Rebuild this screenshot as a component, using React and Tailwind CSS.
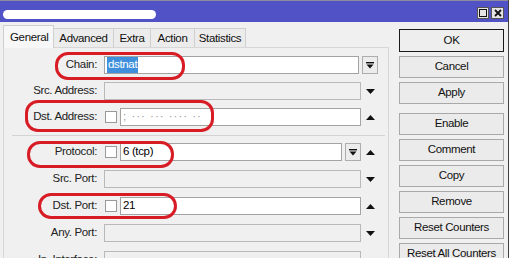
import React from 'react';

const ArrowDown = () => (
  <svg width="9" height="5" viewBox="0 0 9 5"><path d="M0 0H9L4.5 5Z" fill="#111" /></svg>
);

const ArrowUp = () => (
  <svg width="9" height="5" viewBox="0 0 9 5"><path d="M0 5H9L4.5 0Z" fill="#111" /></svg>
);

// little drop-down button: bar above a down triangle
const DropButton = ({ className = '' }) => (
  <div className={`w-[16px] h-[18px] shrink-0 border border-[#adadad] bg-[#ececec] flex items-center justify-center ${className}`}>
    <svg width="8" height="7" viewBox="0 0 8 7">
      <rect x="0" y="0" width="8" height="1.4" fill="#111" />
      <path d="M0.5 2.6H7.5L4 6.6Z" fill="#111" />
    </svg>
  </div>
);

const Checkbox = () => (
  <div className="w-[12px] h-[12px] ml-[1px] border border-[#9a9a9a] bg-white shrink-0" />
);

const Row = ({ label, children, arrow }) => (
  <div className="flex items-center h-[18px] shrink-0">
    <div className="w-[94px] text-right text-[#222] pr-[1px]">{label}</div>
    <div className="ml-[6px] flex items-center">{children}</div>
    {arrow && (
      <div className="w-[19px] flex justify-center">
        {arrow === 'up' ? <ArrowUp /> : <ArrowDown />}
      </div>
    )}
  </div>
);

const Field = ({ width, disabled, children }) => (
  <div
    className={`h-[18px] shrink-0 border flex items-center px-[2px] ${disabled ? 'bg-[#f0f0f0] border-[#b9b9b9]' : 'bg-white border-[#a3a3a3]'}`}
    style={{ width }}
  >
    {children}
  </div>
);

const tabs = [
  { name: 'Advanced', w: 'w-[60px]' },
  { name: 'Extra', w: 'w-[37px]' },
  { name: 'Action', w: 'w-[44px]' },
  { name: 'Statistics', w: 'w-[51px]' },
];

const buttons = ['Cancel', 'Apply'];
const buttons2 = ['Enable', 'Comment', 'Copy', 'Remove', 'Reset Counters', 'Reset All Counters'];

const Btn = ({ children, primary }) => (
  <div
    className={`w-[105px] shrink-0 flex items-center justify-center whitespace-nowrap overflow-hidden text-[#111] ${
      primary ? 'h-[23px] border border-[#1a1a1a] bg-[#eeeeee]' : 'h-[22px] border border-[#a9a9a9] bg-[#ebebeb]'
    }`}
  >
    {children}
  </div>
);

const Mark = ({ className }) => (
  <div className={`absolute border-[3px] border-[#d81c25] rounded-[13px] pointer-events-none ${className}`} />
);

export default function App() {
  return (
    <div className="relative w-[513px] h-[258px] overflow-hidden bg-white font-['Liberation_Sans',Arial,sans-serif] text-[11.5px] tracking-[-0.35px] leading-none">
      <div className="w-[509px] h-full flex flex-col bg-[#f0f0f0] border-r border-[#3f3f3f]">
        {/* title bar */}
        <div className="h-[22px] shrink-0 bg-[#5152c6] border-t border-[#8c8c9c] flex items-start pt-[6px] pl-[3px] pr-[4px]">
          <div className="w-[153px] h-[9px] mt-[3px] rounded-full bg-white" />
          <div className="ml-auto flex gap-[2px]">
            <div className="w-[12px] h-[12px] bg-[#e4e4e4] border border-[#555] flex items-center justify-center">
              <div className="w-[8px] h-[8px] border-[1.5px] border-[#111]" />
            </div>
            <div className="w-[13px] h-[12px] bg-[#e4e4e4] border border-[#555] flex items-center justify-center">
              <svg width="8" height="8" viewBox="0 0 8 8">
                <path d="M1 1L7 7M7 1L1 7" stroke="#111" strokeWidth="1.8" />
              </svg>
            </div>
          </div>
        </div>

        <div className="flex flex-1 min-h-0">
          {/* left: tabs + form */}
          <div className="w-[389px] pl-[3px] flex flex-col">
            <div className="h-[25px] flex items-end shrink-0">
              <div className="w-[51px] h-[23px] -mb-[1px] relative z-10 bg-[#f7f7f7] border border-b-0 border-[#cfcfcf] flex items-center pl-[6px] pt-[1px] text-[#111]">
                General
              </div>
              {tabs.map((t) => (
                <div
                  key={t.name}
                  className={`${t.w} h-[19px] bg-[#ececec] border-t border-r border-[#cfcfcf] flex items-center justify-center pt-[2px] text-[#111]`}
                >
                  {t.name}
                </div>
              ))}
            </div>

            <div className="flex-1 min-h-0 border border-b-0 border-[#d7d7d7] pt-[8px] flex flex-col">
              <div className="flex flex-col gap-[8px] shrink-0">
                <Row label="Chain:">
                  <Field width={255}>
                    <span className="bg-[#3f8fdc] text-white px-[1px] py-[2px]">dstnat</span>
                  </Field>
                  <DropButton className="ml-[3px]" />
                </Row>
                <Row label="Src. Address:" arrow="down">
                  <Field width={257} disabled />
                </Row>
                <Row label="Dst. Address:" arrow="up">
                  <Checkbox />
                  <div className="ml-[3px]">
                    <Field width={241}>
                      <span className="text-[#9a9a9a] tracking-[1px]">;  ···  ···  ····  ··</span>
                    </Field>
                  </div>
                </Row>
              </div>

              <div className="mt-[9px] ml-[8px] mr-[3px] h-px bg-[#d3d3d3] shrink-0" />

              <div className="mt-[7px] flex flex-col gap-[9px] shrink-0">
                <Row label="Protocol:" arrow="up">
                  <Checkbox />
                  <div className="ml-[3px] flex items-center">
                    <Field width={222}>
                      <span>6 (tcp)</span>
                    </Field>
                    <DropButton className="ml-[3px]" />
                  </div>
                </Row>
                <Row label="Src. Port:" arrow="down">
                  <Field width={257} disabled />
                </Row>
                <Row label="Dst. Port:" arrow="up">
                  <Checkbox />
                  <div className="ml-[3px]">
                    <Field width={241}>
                      <span>21</span>
                    </Field>
                  </div>
                </Row>
                <Row label="Any. Port:" arrow="down">
                  <Field width={257} disabled />
                </Row>
                <Row label="In. Interface:" arrow="down">
                  <Field width={257} disabled />
                </Row>
              </div>
            </div>
          </div>

          {/* right: buttons */}
          <div className="ml-[10px] pt-[7px] flex flex-col">
            <Btn primary>OK</Btn>
            <div className="mt-[4px] flex flex-col gap-[4px] shrink-0">
              {buttons.map((b) => (
                <Btn key={b}>{b}</Btn>
              ))}
            </div>
            <div className="mt-[9px] flex flex-col gap-[4px] shrink-0">
              {buttons2.map((b) => (
                <Btn key={b}>{b}</Btn>
              ))}
            </div>
          </div>
        </div>
      </div>

      {/* red annotation marks */}
      <Mark className="left-[55px] top-[52px] w-[130px] h-[28px]" />
      <Mark className="left-[25px] top-[100px] w-[189px] h-[32px]" />
      <Mark className="left-[27px] top-[141px] w-[147px] h-[27px]" />
      <Mark className="left-[38px] top-[193px] w-[139px] h-[26px]" />
    </div>
  );
}
